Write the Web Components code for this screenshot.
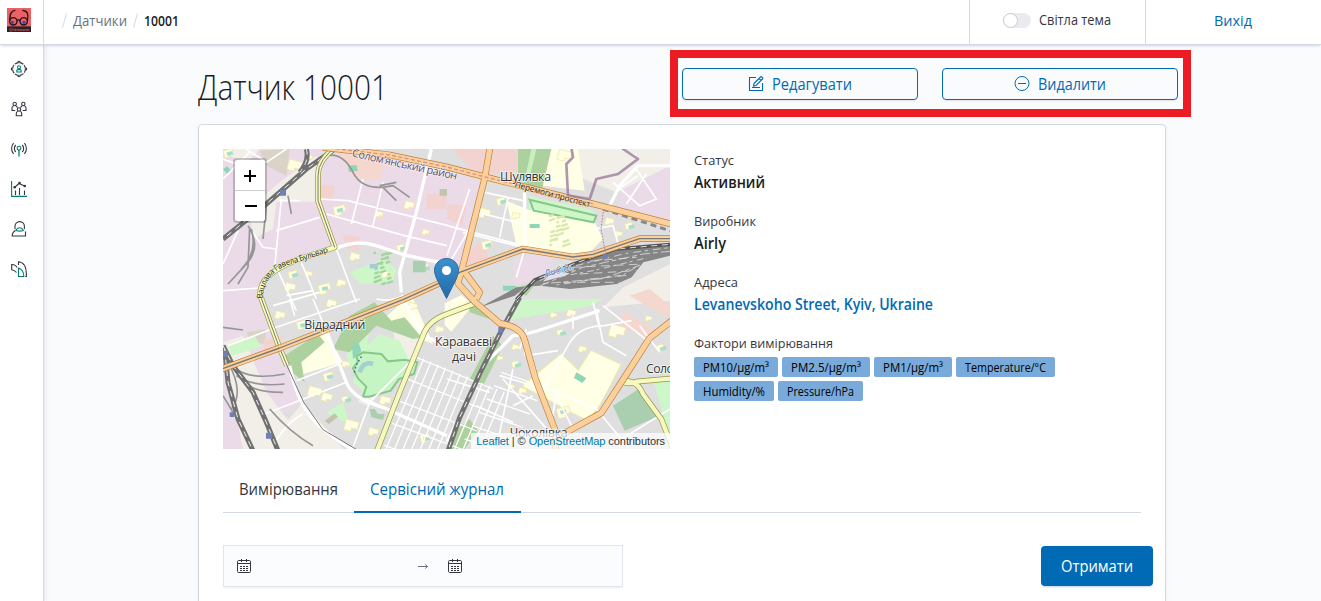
<!DOCTYPE html>
<html lang="uk"><head><meta charset="utf-8"><title>Датчик 10001</title>
<style>
html,body{margin:0;height:100%;overflow:hidden}
body{font-family:"Open Sans","Noto Sans",sans-serif;font-size:14px;color:#343741;background:#fafbfd}
</style></head><body>
<app-shell>
  <app-header slot="header"></app-header>
  <side-nav slot="nav"></side-nav>
  <sensor-page></sensor-page>
</app-shell>
<script>
function el(name, html, init){
  const t=document.createElement('template');t.innerHTML=html;
  customElements.define(name,class extends HTMLElement{
    constructor(){super();this.attachShadow({mode:'open'}).append(t.content.cloneNode(true));}
    connectedCallback(){if(init)init.call(this,this.shadowRoot);}
  });
}
el('app-shell',`<style>:host{display:grid;grid-template:45px 556px/44px 1fr;width:1321px;height:601px;overflow:hidden}
.h{grid-column:1/3;z-index:2}.n{z-index:1}main{overflow:hidden;min-width:0}</style>
<div class="h"><slot name="header"></slot></div><div class="n"><slot name="nav"></slot></div><main><slot></slot></main>`);

el('app-logo',`<style>:host{display:block;width:24px;height:24px}svg{display:block}</style>
<svg width="24" height="24" viewBox="0 0 72 72"><path fill="#ed6063" d="M0 0h72v72H0z"/><path fill="#2b2226" d="M0 55h72v17H0z"/>
<g fill="none" stroke="#1b1418" stroke-width="4"><circle cx="19" cy="40" r="11"/><circle cx="50" cy="40" r="11"/><path d="M30 38q4-5 9 0M8 38C8 18 12 7 25 7M61 38C66 20 61 7 46 7"/></g>
<circle cx="16" cy="43" r="5" fill="#4440b5"/><circle cx="51" cy="43" r="5" fill="#4440b5"/>
<text x="5" y="68" font-size="13" font-weight="700" textLength="61" fill="#d95a60" font-family="Liberation Sans,sans-serif">@izzoom</text></svg>`);

el('theme-switch',`<style>:host{display:flex;align-items:center;gap:8px}.t{width:28px;height:15px;border-radius:8px;background:#e9ebef;position:relative;top:.5px}
.t i{display:block;box-sizing:border-box;width:15px;height:15px;border-radius:50%;background:#fff;border:1px solid #c9cbcf}</style>
<span class="t"><i></i></span><slot></slot>`);

el('app-header',`<style>:host{display:flex;box-sizing:border-box;height:45px;background:#fff;border-bottom:1px solid #d3dae6;box-shadow:0 2px 2px -1px #98a2b34d,0 1px 5px -2px #98a2b34d}
.logo{box-sizing:border-box;width:44px;padding:8px 0 0 7px;border-right:1px solid #d3dae6}
nav{flex:1;display:flex;align-items:center;padding:0 0 3px 20px;color:#69707d}
nav i{width:1px;height:15px;background:#d3dae6;transform:rotate(15deg)}
nav .a{margin:0 8px 0 8px}nav b{font-weight:600;color:#1a1c21;margin-left:8px}
.sw{box-sizing:border-box;width:176px;border-left:1px solid #d3dae6;padding:0 0 5px 33px;display:flex;align-items:center}
.out{box-sizing:border-box;width:176px;border-left:1px solid #d3dae6;padding:0 0 4px 68px;display:flex;align-items:center;color:#006bb4}</style>
<div class="logo"><app-logo></app-logo></div>
<nav><i></i><span class="a"><fit-text w="54">Датчики</fit-text></span><i></i><b><fit-text w="35">10001</fit-text></b></nav>
<div class="sw"><theme-switch><fit-text w="72">Світла тема</fit-text></theme-switch></div>
<div class="out"><fit-text w="38">Вихід</fit-text></div>`);

el('side-nav',`<style>:host{box-sizing:border-box;display:flex;flex-direction:column;gap:24px;align-items:center;width:44px;height:100%;padding:16px 6px 0 0;background:#fff;border-right:1px solid #d3dae6;box-shadow:1px 0 4px #98a2b340}
svg{display:block;width:16px;height:16px;fill:none;stroke:#343741;stroke-width:1.100;overflow:visible}.g{stroke:#017d73}</style>
<svg viewBox="0 0 16 16"><circle cx="8" cy="8" r="6.400" stroke-dasharray="4 1"/><path d="M7 1.400a1 1 0 112 0M7 14.600a1 1 0 102 0M1.400 7a1 1 0 100 2M14.600 7a1 1 0 110 2" stroke-width="1.300"/><g class="g"><circle cx="8" cy="6.300" r="1.500"/><path d="M5.800 11V9.600q0-1 1-1h2.400q1 0 1 1V11z"/></g></svg>
<svg viewBox="0 0 16 16"><circle cx="3.700" cy="3" r="1.700"/><circle cx="12.300" cy="3" r="1.700"/><circle cx="8" cy="8.500" r="1.700"/><path d="M4.200 9.500H1V6.700q0-1.500 1.600-1.700M4.800 5q1.400.2 1.600 1.700M11.800 9.500H15V6.700q0-1.500-1.600-1.700M11.200 5q-1.400.2-1.600 1.700M6.900 10.500q-1.600.2-1.600 1.700v2.600h5.400v-2.600q0-1.500-1.600-1.700"/></svg>
<svg viewBox="0 0 16 16"><path d="M4.800 4a5 5 0 000 7M2.600 2.200a8 8 0 000 10.600M11.200 4a5 5 0 010 7M13.400 2.200a8 8 0 010 10.600"/><g class="g"><circle cx="8" cy="7.200" r="1.900"/><path d="M8 9v6.500" stroke-width="1.300"/></g></svg>
<svg viewBox="0 0 16 16"><path class="g" d="M.6 0v15.400H16"/><path d="M4.500 9.500V14M8.500 7V14M13.500 9.500V14M4 6l4-3.500 5.500 2.500"/><g fill="#343741" stroke="none"><circle cx="3.700" cy="6.200" r="1.300"/><circle cx="8.500" cy="2" r="1.300"/><circle cx="13.800" cy="5" r="1.300"/></g></svg>
<svg viewBox="0 0 16 16"><path d="M4 8.200V5.300a4.700 4.700 0 019.400 0V8M4.500 9.500q-3.300 1.700-3.300 5.500h13.300v-4.500"/><path class="g" d="M5 9.500q1.200-2.800 3.600-2.800t3.700 2.800q-3.600 1.200-7.300 0z"/></svg>
<svg viewBox="0 0 16 16"><path d="M5.500 11.500Q3.500 9 .7 8.700V3.500Q4.800 3.600 6 6.500M7.500 4V.7q4 .4 5.900 3.500 2 2.800 2 11.300h-1.200"/><path class="g" d="M7.500 15.500V7q5.300 1.800 5.300 8.500z"/></svg>`);

el('red-frame',`<style>:host{display:flex;box-sizing:border-box;width:521px;height:67px;border:8px solid #ed1c24;padding:10px 5px 0 4px;gap:24px}</style><slot></slot>`);
el('outline-button',`<style>:host{display:flex;box-sizing:border-box;width:236px;height:32px;align-items:center;justify-content:center;gap:8px;border:1px solid #006bb4;border-radius:4px;color:#006bb4;font-size:15.500px;box-shadow:0 2px 2px -1px #98a2b34d}</style><slot name="icon"></slot><slot></slot>`);
el('fill-button',`<style>:host{display:flex;box-sizing:border-box;width:112px;height:40px;align-items:center;justify-content:center;background:#006bb4;border-radius:4px;color:#fff;font-size:16px;box-shadow:0 2px 2px -1px #366ca14d}</style><slot></slot>`);
el('info-field',`<style>:host{display:block;height:61px}.l{line-height:20px;font-size:13.500px}.v{line-height:24px;font-size:15.500px;font-weight:600;color:#1a1c21}::slotted(*){display:block}</style><div class="l"><slot name="label"></slot></div><div class="v"><slot></slot></div>`);
el('unit-badge',`<style>:host{display:flex;box-sizing:border-box;height:20px;align-items:center;justify-content:center;background:#79aad9;border-radius:2px;color:#000;font-size:12px;font-weight:500;line-height:18px;padding-top:1px}</style><slot></slot>`);
el('tab-bar',`<style>:host{display:flex;height:46px;border-bottom:1px solid #d3dae6;font-size:16px}div{box-sizing:border-box;height:47px;padding:12px 16px 0;line-height:22px}.on{color:#006bb4;border-bottom:2px solid #006bb4}</style>
<div><fit-text w="99">Вимірювання</fit-text></div><div class="on" style="padding-right:17px"><fit-text w="134">Сервісний журнал</fit-text></div>`);
const cal='<svg width="16" height="16" viewBox="0 0 16 16" fill="none" stroke="#343741"><rect x="1.500" y="2.500" width="13" height="12" rx="1.200"/><path d="M1.500 5.500h13M5.500 1v3M10.500 1v3"/><path stroke-dasharray="2 1" d="M4 8.500h8M4 10.500h8M4 12.500h8"/></svg>';
el('date-range',`<style>:host{display:flex;box-sizing:border-box;width:400px;height:42px;align-items:center;background:#fbfcfd;border:1px solid #e0e5ee;box-shadow:0 2px 2px -1px #98a2b333;padding-left:12px}svg{display:block;margin-bottom:1px}.m{margin:0 18px 0 165px}</style>
${cal}<svg class="m" width="12" height="8" viewBox="0 0 12 8" fill="none" stroke="#69707d"><path d="M1 4.500h9.500M8.300 2.500l2.200 2-2.200 2"/></svg>${cal}`);

el('city-map',`<style>:host{display:block;position:relative;width:447px;height:300px;overflow:hidden}
.map{display:block}
.z{position:absolute;left:10px;top:9px;width:30px;border:2px solid #0003;border-radius:4px;background:#fff;background-clip:padding-box}
.z svg{display:block;width:30px;height:30px}.z svg+svg{border-top:1px solid #ccc}
.attr{position:absolute;right:0;bottom:0;padding:0 5px;background:#ffffffb3;font:11px/16px "Liberation Sans",sans-serif;letter-spacing:-.07px;color:#333;white-space:nowrap}.attr a{color:#0078a8}
.pin{position:absolute;left:211px;top:109px}</style>
<svg class="map" width="447" height="300" viewBox="0 0 1341 900" font-family="Open Sans,Noto Sans,sans-serif">
<defs><pattern id="hatch" width="9" height="9" patternUnits="userSpaceOnUse" patternTransform="rotate(45)"><path fill="#f5d9d0" d="M0 0h9v9H0z"/><path stroke="#eebcb5" d="M0 0v9"/></pattern></defs>
<path fill="#dfdfdf" d="M0 0h1341v900H0z"/>
<g fill="#ebdbe8"><path d="M0 0H340L780 85 715 370 560 330 540 310 430 280 340 292 160 355 115 420 200 650 240 760 150 810 60 900H0z"/><path d="M1210 100l131-60V225l-160-45z"/><path d="M870 330l120-25-10 60-110 50z"/></g>
<g fill="#f2efe9"><path d="M170 100L280 20V158H160L150 240 90 270 80 180zM0 580l60-20 70 170 70 90-20 80H60L20 700zM20 0h90l-40 45L0 10zM1050 0h291v50l-160 80-100-40-40-20zM1341 345v110l-200 20 60-60zM510 545l75 25-20 60-80 70-50 70-30-10 30-50 90-80zM190 820l50-60 130 150H140z"/></g>
<g fill="#d9d3c8"><path d="M110 5L200 0 190 80 130 50zM70 550l60-10-5 45-45-8z"/></g>
<path fill="url(#hatch)" d="M340 0l150 40-20 55-80-10zM1200 485l100 60-25 25-80-40zM1220 440l60-20 61 50v40z"/>
<g fill="#f3d3cf"><path d="M290 105l45 5-5 45-40-5zM672 165l60 5-15 60-45-20zM740 300l35-20 30 55-50 25-30-20zM690 0h200v70l-130 10zM120 575l60-15-10 40-45 5zM360 255l50 10-3 40-40-8zM610 135h60v45h-60z"/></g>
<g fill="#ffffe5"><path d="M905 180l205 30 30 60-60 60-180-30zM930 0h135l20 125-170-20zM540 450h30l60 135-160-65 80-70zM200 620l110-70 50 90-120 35zM850 155l60 25-10 110-20-3z"/>
<path d="M665 463l50-25 35 30-65 80-20-20z"/><path stroke="#f0ea9b" stroke-width="3" d="M1060 612l50 63 70-76 35 28 68 12-38 88-54 36-50 46-137-83z" opacity="0"/><path stroke="#f0ea9b" stroke-width="3" d="M1060 614l52 50 38-60 90 42-30 60-35 65-35 45-197-105z" transform="translate(-46 0)"/></g>
<g fill="#cdf7c9"><path d="M380 370l100-40 40 30-10 40-100 5zM917 140l195 45-10 25-60-5-125-25zM470 555l60 20 30 60-70 55-60 45-40-35 20-90zM900 450h235l-25 20-200 35-60 10zM1290 690l51-10v190zM370 620l30-60 40-10-20 90-35 20zM310 790l50-30 15 50-10 10zM15 590l80-30 20 35-90 25z"/></g>
<g fill="#add19e"><path d="M885 0h100l-30 130-70-40zM185 620l100-65 20 25-70 60 10 60-50-40zM380 500l75-40 50 55 40-10 50 60-25 5-110-40-80 80-50-10zM740 450l60 60-60-20zM860 420l80-20-30 40zM740 690l70-130 30 30-60 120zM680 860l60-50 25 35-40 55h-45z"/><path fill="#a9cfb0" d="M1170 770l85-55 30 55 25 30-105 45z"/></g>
<path fill="#c8f0bd" d="M925 0h15l-20 85-12-4z"/>
<g stroke="#86c889" stroke-width="6"><path fill="#c5f5c2" d="M400 622l20-12 55 5 20 22 50-5 38 8-10 35-45 15-25 35-65 18-18 0 10-30-25-25-15-30 15-20z"/><path fill="#cdf7c9" d="M920 152l200 48-8 20-180-35z"/></g>
<g id="build"></g>
<path fill="none" stroke="#a5cfd0" stroke-width="14" d="M410 670q10-35 40-25"/><path fill="#aac9e0" d="M440 345l25 0 0 15-25-2z"/>
<g fill="none" stroke="#fff" stroke-width="5"><g id="grid"></g>
<path stroke-width="10" d="M335 300Q400 270 460 290L545 318 672 345M625 0L580 190 530 370 535 430M1341 50L1245 50 1190 110 1155 180M905 130V290M200 650Q225 780 300 840T400 905M535 440L600 560 672 590M310 545L370 700Q390 750 480 775L672 860M672 880L790 640 870 560Q900 560 960 540L1130 485"/>
<path d="M1120 780l100 120M290 150l85 5 120 30 180 45M310 195l235 65 127 30M420 90L385 225M480 100L450 230M170 155h60M160 245l130-40M175 150L155 355M340 300L400 460M160 355l60 130M235 340l45 110M0 425l110-8M75 230l45 65 40 5M0 345l45-100M270 450l50 120M190 440l80-15M15 590l145-55 250-85M220 695l130-50M125 795l245-95M150 890q40-70 90-95M390 895l50-135 120-120M430 750l120 60M672 230l230 60M740 120L672 320M785 130l115 25M765 190l135 35M855 145l-25 120M720 250l180 45M680 340l60-100M905 300l-25 85M1145 180l-40-20M1170 100l80 70 50-20-60-90M1180 125l65-45M1210 165l60-90M1110 240l60-10 20 70M910 540l-20 60M905 560v60M910 620l95-15M960 720l75-130q30-60 110-60l80-15M1050 500v40M1120 480l20 100 70 40M980 720l140 60M1110 460l20 80M830 680l150 45M870 660L820 900M800 730L672 690M840 690l140 160M760 770L870 820M930 740L870 770M1000 730l-20 130M1140 470l140 110M1250 530l60 80M1341 780L1180 880M1050 840l-50-100M460 450q40 10 80-10M1190 0l50 20M0 30l110 40"/>
<path d="M150 470L290 430M200 450l15 50M70 0l60 40 60-40M0 90l80-80"/></g>
<g fill="none" stroke="#969696" stroke-width="5"><path d="M310 20q50-10 80 50t120 40l50 35M470 110l50-10M480 115l40 40M75 230q40 60 0 110l-60 65M80 235l-5 120-30 50M85 240q20 70-30 120M130 170l-10 100M195 140l10 55M35 655q40 40 150 20M40 680q50 35 145 25M70 705q30 25 110 25M0 535l60 8M0 740l60 100M140 780q60 70 130 110M15 640q50 90 10 140"/></g>
<path fill="#858585" d="M875 440l60-50 115-45 130-45 161-15v35l-80 20-35 45-45 20-140 15-90-10-70 5-110 60z"/>
<g stroke="#dededd" stroke-width="2.500" fill="none"><path stroke-dasharray="23 12 9 15" d="M950 395l80-38 180-44 150-20"/><path stroke-dasharray="14 10 30 9" d="M930 420l150-65 180-40 100-10M960 404l180-15 110-40"/><path stroke-dasharray="9 14 20 8" d="M970 390l140-25 160-38M1000 408l200-30 50-30"/><path stroke-dasharray="26 16" d="M1020 400l170 0M1060 340l180-15M1050 355l210-10M1070 375l170-10M1100 390l125-12"/></g>
<path fill="#ebdbe8" d="M990 362l50 12-30 10-50 14z"/>
<g fill="none" stroke="#707070" stroke-width="15"><path d="M350-10L250 60 130 165 0 270M250 0q10 35-20 70M0 590l30 60 60 80 40 90 35 85M5 600l10 100 30 110 45 95M890 445l-55 100-65 130-60 130-35 100"/></g>
<g fill="none" stroke="#f0f0f0" stroke-width="3" stroke-dasharray="17 15"><path d="M350-10L250 60 130 165 0 270M250 0q10 35-20 70M0 590l30 60 60 80 40 90 35 85M5 600l10 100 30 110 45 95M890 445l-55 100-65 130-60 130-35 100"/></g>
<path fill="none" stroke="#555" stroke-width="10" d="M880 452l55-59 115-48 130-45 161-14"/><path fill="none" stroke="#ddd" stroke-width="3" stroke-dasharray="18 14" d="M880 452l55-59 115-48 130-45 161-14"/>
<path fill="none" stroke="#888" stroke-width="9" stroke-dasharray="18 12" d="M1140 180l201 65"/>
<g fill="none" stroke-linejoin="round"><g stroke="#96934c" stroke-width="17"><path d="M345-10Q285 30 285 80v75l50 140-120 40Q105 380 112 440l55 150 25 60M460 910l70-180 70-170q15-45 72-65l80-30M1350 688l-110 10q-25 10-40 0M1200 695q45 0 60 40l55 75 35 90"/></g>
<g stroke="#f6f9be" stroke-width="13"><path d="M345-10Q285 30 285 80v75l50 140-120 40Q105 380 112 440l55 150 25 60M460 910l70-180 70-170q15-45 72-65l80-30M1350 688l-110 10q-25 10-40 0M1200 695q45 0 60 40l55 75 35 90"/></g>
<path stroke="#777" stroke-width="3" d="M345-10Q285 30 285 80v75l50 140M112 440l55 150 25 60 50 110 58 82 110 65"/>
<g stroke="#bd8038" stroke-width="20"><path d="M300-5L500 18l172 36 115 30 325 81 240 62M-10 662l180-65 370-145 132-60 38-22 190-70 150 24 60-8 140-47h110M802-10l-17 98-70 280-10 35 50 55 75 65q65 10 75 50l32 115 60 157v60M1350 512l-70 55-80 125-65 100-100 55-40 20M725 370l45 60-10 20"/></g>
<g stroke="#fcd09c" stroke-width="16"><path d="M300-5L500 18l172 36 115 30 325 81 240 62M-10 662l180-65 370-145 132-60 38-22 190-70 150 24 60-8 140-47h110M802-10l-17 98-70 280-10 35 50 55 75 65q65 10 75 50l32 115 60 157v60M1350 512l-70 55-80 125-65 100-100 55-40 20M725 370l45 60-10 20"/></g>
<path stroke="#777" stroke-width="4" d="M-10 662l180-65 370-145 132-60 38-22 190-70 150 24 60-8 140-47h110"/><path stroke="#d3938c" stroke-width="4" stroke-dasharray="12 7" d="M300-5L500 18l172 36 115 30 325 81"/>
<path stroke="#c4798d" stroke-width="3" stroke-dasharray="5 4" d="M1142 180l-8 60 15 80"/>
<path stroke="#9b7c9d" stroke-width="8" opacity=".8" d="M1045-5l5 30-20 20 5 95 65 10 20-60 65-15 60-45-75-50"/></g>
<g fill="#7080b3"><path d="M171 122h18v18h-18zM0 605h14v18H0zM20 790h14v14H20zM129 851h18v18h-18zM826 534h14v18h-14zM1140 315h14v14h-14z"/></g>
<path fill="none" stroke="#3648bb" stroke-width="4" stroke-dasharray="4 8" d="M415 623l-15 25-8 30"/>
<g fill="#61516f" stroke="#fff" stroke-opacity=".7" stroke-width="4" paint-order="stroke" font-size="33"><path id="p1" d="M386 22Q540 58 770 107" fill="none" stroke="none"/><text textLength="322"><textPath href="#p1">Солом'янський район</textPath></text></g>
<path id="p2" d="M118 450Q125 375 190 350L345 300" fill="none"/><text font-size="24" fill="#222" stroke="#f6f9be" stroke-width="3" paint-order="stroke" textLength="263"><textPath href="#p2">Вацлава Гавела Бульвар</textPath></text>
<path id="p3" d="M874 114L1125 182" fill="none"/><text font-size="25" fill="#222" stroke="#fcd6a4" stroke-width="3" paint-order="stroke" textLength="234"><textPath href="#p3">Перемоги проспект</textPath></text>
<text font-size="28" font-style="italic" fill="#3c78b4" stroke="#fff" stroke-width="3" paint-order="stroke" transform="translate(966 384) rotate(-14)" textLength="90">Либідь</text>
<g fill="#333" stroke="#fff" stroke-opacity=".8" stroke-width="5" paint-order="stroke" font-size="37"><text x="831" y="97" textLength="153">Шулявка</text><text x="244" y="540" textLength="183">Відрадний</text><text x="636" y="590" textLength="171">Караваєві</text><text x="687" y="636" textLength="72">дачі</text><text x="1269" y="671" textLength="115">Солом'</text><text x="860" y="863" textLength="174">Чоколівка</text></g>
</svg>
<svg class="pin" width="25" height="41" viewBox="0 0 25 41"><defs><linearGradient id="pg" x2="0" y2="1"><stop stop-color="#3b91cf"/><stop offset="1" stop-color="#216ba8"/></linearGradient></defs><path fill="url(#pg)" stroke="#2e6c97" d="M12.500.5C5.700.5.500 5.800.500 12.500c0 3 1.500 6.700 2.800 9.500L12.500 40.500 21.700 22c1.300-2.800 2.800-6.500 2.800-9.500 0-6.700-5.200-12-12-12z"/><circle cx="12.500" cy="12.500" r="4.500" fill="#fff"/></svg>
<div class="z"><svg viewBox="0 0 30 30" stroke="#000" stroke-width="2"><path d="M9 16h12M15 10v12"/></svg><svg viewBox="0 0 30 30" stroke="#000" stroke-width="2"><path d="M10 15h12"/></svg></div>
<div class="attr"><a>Leaflet</a> | © <a>OpenStreetMap</a> contributors</div>`,function(r){
  // dense parallel side streets and scattered building blocks
  let d='';for(let i=0;i<13;i++){const x=600+i*22,y=590+i*9;d+=`M${x-20} ${y+30}L${x-145} ${y+330}`;}
  for(let i=0;i<5;i++)d+=`M${580-i*24} ${625+i*66}l230 ${95-i*3}`;
  for(let i=0;i<6;i++)d+=`M${835-i*22} ${670+i*40}l130 45`;
  r.getElementById('grid').innerHTML=`<path stroke-width="4" d="${d}"/>`;
  const b=[[330,175,35],[460,185,22],[548,155,28],[195,370,26],[190,400,30],[250,365,20],[285,410,35],[345,390,25],[385,310,28],[520,290,22],[600,240,20],[480,365,24],[590,350,25],[160,485,28],[315,450,28],[220,520,30],[560,460,25],[640,530,24],[300,675,28],[260,710,38],[300,730,30],[355,745,18],[370,810,40],[440,835,28],[590,860,28],[475,740,30],[360,635,22],[820,150,25],[770,175,35],[870,190,22],[775,280,30],[1150,205,25],[1180,245,20],[1205,225,22],[870,585,20],[825,620,16],[865,640,20],[985,490,18],[1035,480,26],[1000,545,18],[1070,590,22],[1165,525,45],[1300,590,20],[890,715,22],[860,705,16],[1000,780,38],[200,30,40],[250,15,20],[0,5,28],[1010,0,40],[1270,500,18]];
  let s='';b.forEach(([x,y,w],i)=>{s+=`<path fill="#fffee4" stroke="#eee69a" stroke-width="2" transform="rotate(${i%3?15:-14} ${x} ${y})" d="M${x} ${y}h${w}v${w*.55}h${-w*.45}v${w*.25}H${x}z"/>`;if(i%3==0)s+=`<rect x="${x+9}" y="${y+8}" width="18" height="11" fill="#a9dfc9" transform="rotate(-15 ${x} ${y})"/>`;});
  for(let i=0;i<36;i++){const x=450+(i*37)%55+(i>17?520:0),y=(i>17?190:310)+(i*29)%100;s+=`<rect x="${x}" y="${y}" width="${8+i%4*6}" height="7" fill="${i>17?'#d8e8b0':'#a2d59e'}" transform="rotate(-20 ${x} ${y})"/>`;}
  s+='<path fill="#8fd5b8" d="M376 50l25-2 3 17-27 4zM387 590l20-9 8 25-25 25zM1060 670l30 18-12 14-25-15zM840 410h40v15h-40zM0 60l12-8 12 12-12 12zM920 225h30v12h-30z"/><path fill="#c6c3ad" d="M305 815l30-22 10 10-28 22zM650 120h22v20h-22z"/><path fill="#a9cfb0" d="M570 335h38v35h-38zM440 780l15 0 10 15 20 0-5 18-35-8z"/>';
  r.getElementById('build').innerHTML=s;
});

el('sensor-page',`<style>:host{display:block;width:968px;padding:5px 155px 0 154px}
.top{display:flex;height:74px;justify-content:space-between}h1{margin:9px 0 0;font-size:35.500px;line-height:54px;font-weight:300;color:#1a1c21}
red-frame{margin-right:-25px;flex:none}
.card{box-sizing:border-box;width:968px;height:520px;background:#fff;border:1px solid #d3dae6;border-radius:4px;padding:24px;box-shadow:0 2px 4px #98a2b326}
.row{display:flex;gap:24px}.info{padding-top:1px;width:420px}.cap{line-height:20px;font-size:13.500px}
.b{display:flex;flex-wrap:wrap;gap:4px;width:380px;margin-top:4px}tab-bar{margin-top:17px}
.f{display:flex;justify-content:space-between;width:930px;padding-top:32px}fill-button{margin-top:1px}a{color:#006bb4}</style>
<div class="top"><h1><fit-text w="190">Датчик 10001</fit-text></h1>
<red-frame><outline-button><svg slot="icon" width="16" height="16" viewBox="0 0 16 16" fill="none" stroke="#006bb4" stroke-width="1.100"><path d="M8 1.500H1.500v13h13V7M4 11.500h8M6 7.500L12.500 1q.7-.7 1.400 0l.6.600q.7.700 0 1.400L8 9.500l-2.500.500zM11 2.500l2 2"/></svg><fit-text w="80">Редагувати</fit-text></outline-button>
<outline-button><svg slot="icon" width="16" height="16" viewBox="0 0 16 16" fill="none" stroke="#006bb4"><circle cx="8" cy="7.500" r="7"/><path d="M4 7.500h8"/></svg><fit-text w="68">Видалити</fit-text></outline-button></red-frame></div>
<div class="card"><div class="row"><city-map></city-map><div class="info">
<info-field><fit-text slot="label" w="40">Статус</fit-text><fit-text w="71">Активний</fit-text></info-field>
<info-field><fit-text slot="label" w="62">Виробник</fit-text><fit-text w="32">Airly</fit-text></info-field>
<info-field><fit-text slot="label" w="44">Адреса</fit-text><a><fit-text w="239">Levanevskoho Street, Kyiv, Ukraine</fit-text></a></info-field>
<div class="cap"><fit-text w="139">Фактори вимірювання</fit-text></div>
<div class="b"><unit-badge style="width:84px"><fit-text w="66">PM10/µg/m³</fit-text></unit-badge><unit-badge style="width:88px"><fit-text w="70">PM2.5/µg/m³</fit-text></unit-badge><unit-badge style="width:78px"><fit-text w="60">PM1/µg/m³</fit-text></unit-badge><unit-badge style="width:99px"><fit-text w="81">Temperature/°C</fit-text></unit-badge><unit-badge style="width:80px"><fit-text w="62">Humidity/%</fit-text></unit-badge><unit-badge style="width:85px"><fit-text w="67">Pressure/hPa</fit-text></unit-badge></div>
</div></div><tab-bar></tab-bar><div class="f"><date-range></date-range><fill-button><fit-text w="72">Отримати</fit-text></fill-button></div></div>`);

// scales its text horizontally to the width given in the "w" attribute
el('fit-text',`<style>:host{display:inline-block!important;white-space:nowrap}span{display:inline-block;transform-origin:0 50%}</style><span><slot></slot></span>`,function(r){
  const w=+this.getAttribute('w'),s=r.querySelector('span');
  s.style.transform=`scaleX(${(w/s.getBoundingClientRect().width).toFixed(4)})`;
  this.style.width=w+'px';
});
</script></body></html>
